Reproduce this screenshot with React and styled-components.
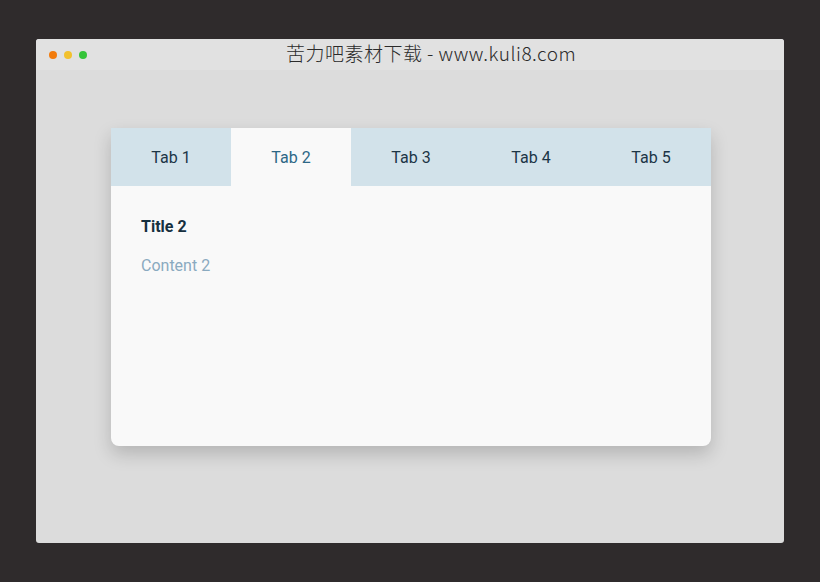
import React, { useState } from 'react'
import styled, { createGlobalStyle } from 'styled-components';

const GlobalStyle = createGlobalStyle`
  html, body {
    margin: 0;
    padding: 0;
    background: #2f2b2c;
  }
  body {
    font-family: Roboto, "Noto Sans", sans-serif;
  }
`

const tabs = [1, 2, 3, 4, 5];

const App = () => {
  const [active, setActive] = useState(2);

  return (
    <Page>
      <GlobalStyle />
      <Window>
        <TitleBar>
          <Dots>
            <Dot color='#f27b0c' />
            <Dot color='#f2c12e' />
            <Dot color='#35c43a' />
          </Dots>
          <Caption>苦力吧素材下载 - www.kuli8.com</Caption>
        </TitleBar>
        <Body>
          <Card>
            <TabBar>
              {tabs.map(n => (
                <Tab key={n} $active={active === n} onClick={() => setActive(n)}>Tab {n}</Tab>
              ))}
            </TabBar>
            <Panel>
              <Title>Title {active}</Title>
              <Text>Content {active}</Text>
            </Panel>
          </Card>
        </Body>
      </Window>
    </Page>
  )
}

export default App

const Page = styled.div`
  width: 820px;
  height: 582px;
  padding: 39px 0 0 36px;
  box-sizing: border-box;
`

const Window = styled.div`
  width: 748px;
  height: 504px;
  background: #dcdcdc;
  border-radius: 3px;
  overflow: hidden;
  display: flex;
  flex-direction: column;
`

const TitleBar = styled.div`
  height: 31px;
  background: #e1e1e1;
  position: relative;
  display: flex;
  align-items: center;
  justify-content: center;
`

const Dots = styled.div`
  position: absolute;
  left: 13px;
  top: 12px;
  display: flex;
  gap: 7px;
`

const Dot = styled.span`
  width: 8px;
  height: 8px;
  border-radius: 50%;
  background: ${p => p.color};
`

const Caption = styled.div`
  font-family: "Noto Sans CJK SC", sans-serif;
  font-weight: 300;
  font-size: 19px;
  letter-spacing: 0.5px;
  color: #2b2b2b;
  margin-left: 42px;
  margin-top: -4px;
`

const Body = styled.div`
  flex: 1;
  padding: 58px 0 0 75px;
`

const Card = styled.div`
  width: 600px;
  height: 318px;
  background: #f9f9f9;
  border-radius: 0 0 8px 8px;
  box-shadow: 0 8px 18px rgba(0, 0, 0, 0.18);
  overflow: hidden;
`

const TabBar = styled.div`
  display: grid;
  grid-template-columns: repeat(5, 1fr);
  height: 58px;
  background: #d2e2ea;
`

const Tab = styled.div`
  display: flex;
  align-items: center;
  justify-content: center;
  font-size: 16px;
  color: ${p => p.$active ? '#2d6786' : '#1c3546'};
  background: ${p => p.$active ? '#f9f9f9' : 'transparent'};
  cursor: pointer;
`

const Panel = styled.div`
  padding: 31px 30px;
`

const Title = styled.div`
  font-size: 16px;
  font-weight: 700;
  color: #16303f;
  margin-bottom: 20px;
`

const Text = styled.div`
  font-size: 16px;
  color: #8aaac0;
`
